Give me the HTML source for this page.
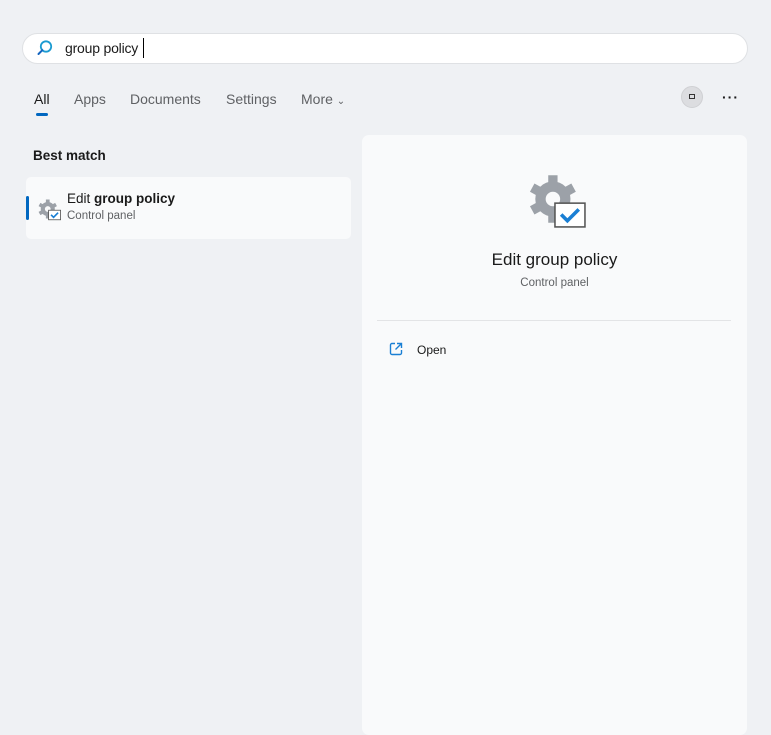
<!DOCTYPE html>
<html><head><style>
*{margin:0;padding:0;box-sizing:border-box}
body{width:771px;height:723px;background:#eff1f4;font-family:"Segoe UI","Liberation Sans",sans-serif;position:relative;overflow:hidden;color:#1a1a1a}
.abs{position:absolute}
.search{left:22px;top:33px;width:726px;height:31px;background:#fff;border:1px solid #dfe1e4;border-radius:16px}
.tab{top:91px;font-size:14px;color:#5f6164}
.panel{left:362px;top:135px;width:385px;height:600px;background:#f9fafb;border-radius:7px}
.item{left:26px;top:177px;width:325px;height:62px;background:#f9fafb;border-radius:5px}
</style></head><body>
<div class="abs search"></div>
<svg class="abs" style="left:36px;top:39px" width="18" height="18" viewBox="0 0 18 18"><circle cx="10" cy="7.5" r="5.2" fill="none" stroke="#1b9bd1" stroke-width="1.8"/><path d="M6.3 11.2 L2.5 15" stroke="#1565c0" stroke-width="2" stroke-linecap="round"/></svg>
<div class="abs" style="left:65px;top:40px;font-size:14px;color:#1a1a1a;letter-spacing:-0.2px">group policy</div>
<div class="abs" style="left:143px;top:38px;width:1px;height:20px;background:#000"></div>
<div class="abs tab" style="left:34px;color:#1a1a1a">All</div>
<div class="abs" style="left:36px;top:113px;width:12px;height:3px;border-radius:2px;background:#0067c0"></div>
<div class="abs tab" style="left:74px">Apps</div>
<div class="abs tab" style="left:130px">Documents</div>
<div class="abs tab" style="left:226px">Settings</div>
<div class="abs tab" style="left:301px">More <span style="font-size:10px">&#8964;</span></div>
<div class="abs" style="left:681px;top:86px;width:22px;height:22px;border-radius:50%;background:#dcdde0;border:1px solid #cfd0d3"></div>
<div class="abs" style="left:689px;top:94px;width:6px;height:5px;border:1px solid #333"></div>
<div class="abs" style="left:722px;top:89px;font-size:14px;font-weight:bold;letter-spacing:1px">···</div>
<div class="abs" style="left:33px;top:148px;font-size:13.5px;font-weight:600">Best match</div>
<div class="abs item"></div>
<div class="abs" style="left:26px;top:196px;width:3px;height:24px;border-radius:2px;background:#0067c0"></div>
<svg class="abs" style="left:37px;top:197px" width="24" height="24" viewBox="0 0 58 56">
<g fill="#9ca1a8"><circle cx="26" cy="28" r="17"/><g stroke="#9ca1a8" stroke-width="9"><path d="M26 5V51M6 17L46 39M6 39L46 17"/></g></g><circle cx="26" cy="28" r="7" fill="#f9fafb"/>
<rect x="28" y="31" width="29" height="23" fill="#fff" stroke="#555" stroke-width="2"/><path d="M34 42l6 6 11-11" fill="none" stroke="#1a7fd4" stroke-width="4"/></svg>
<div class="abs" style="left:67px;top:191px;font-size:13.5px">Edit <b>group policy</b></div>
<div class="abs" style="left:67px;top:210px;font-size:11.5px;color:#5f6164">Control panel</div>
<div class="abs panel"></div>
<svg class="abs" style="left:526px;top:170px" width="60" height="58" viewBox="0 0 58 56">
<g fill="#9ca1a8"><circle cx="26" cy="28" r="17"/><g stroke="#9ca1a8" stroke-width="9"><path d="M26 5V51M6 17L46 39M6 39L46 17"/></g></g><circle cx="26" cy="28" r="7" fill="#f9fafb"/>
<rect x="28" y="32" width="29" height="23" fill="#fff" stroke="#555" stroke-width="1.5"/><path d="M34 43l6 6 11-11" fill="none" stroke="#1a7fd4" stroke-width="3.5"/></svg>
<div class="abs" style="left:362px;top:250px;width:385px;text-align:center;font-size:17px">Edit group policy</div>
<div class="abs" style="left:362px;top:277px;width:385px;text-align:center;font-size:11.5px;color:#5f6164">Control panel</div>
<div class="abs" style="left:377px;top:320px;width:354px;height:1px;background:#e3e4e6"></div>
<svg class="abs" style="left:389px;top:342px" width="14" height="14" viewBox="0 0 14 14"><path d="M6 1.5H3a1.5 1.5 0 0 0-1.5 1.5v8A1.5 1.5 0 0 0 3 12.5h8a1.5 1.5 0 0 0 1.5-1.5V8M8 1.5h4.5V6M12.5 1.5L6.5 7.5" fill="none" stroke="#1a7fd4" stroke-width="1.4"/></svg>
<div class="abs" style="left:417px;top:343px;font-size:12px">Open</div>
</body></html>
